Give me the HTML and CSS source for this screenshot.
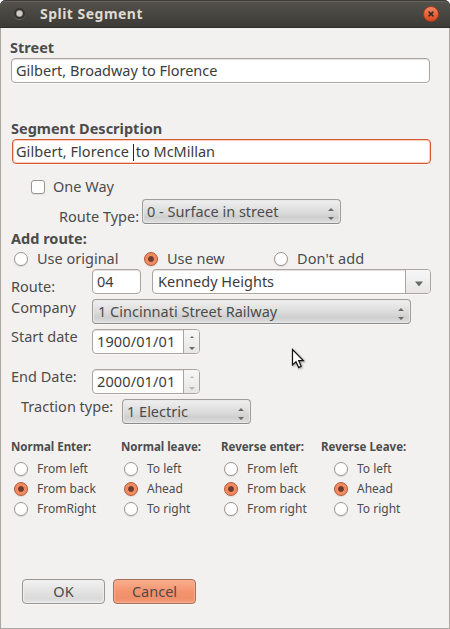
FILE: index.html
```html
<!DOCTYPE html>
<html lang="en">
<head>
<meta charset="utf-8">
<title>Split Segment</title>
<link rel="stylesheet" href="styles.css">
</head>
<body>
<div class="window">
  <header class="titlebar">
    <span class="app-dot"></span>
    <h1>Split Segment</h1>
    <span class="close"><svg width="16" height="16" viewBox="0 0 16 16"><path d="M5.6 5.6l4.8 4.8M10.4 5.6l-4.8 4.8"/></svg></span>
  </header>
  <main class="form">
    <div class="heading street-title">Street</div>
    <div class="entry wide"><span>Gilbert, Broadway to Florence</span></div>
    <div class="heading segment-title">Segment Description</div>
    <div class="entry wide focus"><span class="before-caret">Gilbert, Florence </span><i class="caret"></i><span>to McMillan</span></div>
    <div class="row check-row"><span class="checkbox"></span><span>One Way</span></div>
    <div class="row type-row"><span class="label">Route Type:</span>
      <div class="select type"><span>0 - Surface in street</span><svg class="arrows" width="8" height="14" viewBox="0 0 8 14"><path d="M1 4L4 1L7 4zM1 10L4 13L7 10z"/></svg></div></div>
    <div class="heading">Add route:</div>
    <div class="row radios">
      <label class="option"><i class="radio"></i><span>Use original</span></label>
      <label class="option"><i class="radio on"></i><span>Use new</span></label>
      <label class="option"><i class="radio"></i><span class="dont-add">Don't add</span></label>
    </div>
    <div class="row route-row"><span class="label low">Route:</span>
      <div class="entry number"><span>04</span></div>
      <div class="entry combo"><span>Kennedy Heights</span><span class="drop"><svg width="8" height="6" viewBox="0 0 8 6"><path d="M0 .5H8L4 5.5z"/></svg></span></div></div>
    <div class="row company-row"><span class="label">Company</span>
      <div class="select company"><span>1 Cincinnati Street Railway</span><svg class="arrows" width="8" height="14" viewBox="0 0 8 14"><path d="M1 4L4 1L7 4zM1 10L4 13L7 10z"/></svg></div></div>
    <div class="row date-row"><span class="label">Start date</span>
      <div class="entry spin"><span class="date">1900/01/01</span><span class="steps"><svg width="6" height="16" viewBox="0 0 6 16"><path d="M1 4L3 2L5 4zM0 13H6L3 16z"/></svg></span></div></div>
    <div class="row date-row end"><span class="label">End Date:</span>
      <div class="entry spin"><span class="date">2000/01/01</span><span class="steps off"><svg width="6" height="16" viewBox="0 0 6 16"><path d="M1 4L3 2L5 4zM0 13H6L3 16z"/></svg></span></div></div>
    <div class="row traction-row"><span class="label">Traction type:</span>
      <div class="select traction"><span>1 Electric</span><svg class="arrows" width="8" height="14" viewBox="0 0 8 14"><path d="M1 4L4 1L7 4zM1 10L4 13L7 10z"/></svg></div></div>
    <div class="groups">
      <section><h2>Normal Enter:</h2>
        <label class="option"><i class="radio"></i><span>From left</span></label>
        <label class="option"><i class="radio on"></i><span>From back</span></label>
        <label class="option"><i class="radio"></i><span>FromRight</span></label></section>
      <section><h2>Normal leave:</h2>
        <label class="option"><i class="radio"></i><span>To left</span></label>
        <label class="option"><i class="radio on"></i><span>Ahead</span></label>
        <label class="option"><i class="radio"></i><span>To right</span></label></section>
      <section><h2>Reverse enter:</h2>
        <label class="option"><i class="radio"></i><span>From left</span></label>
        <label class="option"><i class="radio on"></i><span>From back</span></label>
        <label class="option"><i class="radio"></i><span>From right</span></label></section>
      <section class="last"><h2>Reverse Leave:</h2>
        <label class="option"><i class="radio"></i><span>To left</span></label>
        <label class="option"><i class="radio on"></i><span>Ahead</span></label>
        <label class="option"><i class="radio"></i><span>To right</span></label></section>
    </div>
    <footer class="actions"><div class="button"><span>OK</span></div><div class="button cancel"><span>Cancel</span></div></footer>
  </main>
  <svg class="pointer" width="15" height="22" viewBox="0 0 15 22"><path d="M1.5 1.5V17L5 13.8L7.7 19.6L10.2 18.3L7.7 12.7H12.4z"/></svg>
</div>
</body>
</html>
```
FILE: styles.css
```css
* { box-sizing: border-box; }
body { margin: 0; background: #fff; font: 14.5px/20px "Noto Sans", "Open Sans", sans-serif; color: #4c4c4c; }
.window { position: relative; width: 450px; height: 629px; background: #f2f1f0; border: 1px solid #aaa7a1; border-top: 0; border-radius: 6px 6px 0 0; white-space: nowrap; }
.titlebar { height: 28px; margin: 0 -1px; padding: 0 11px 0 14px; display: flex; align-items: center; background: linear-gradient(#53524b, #3c3b37); border-radius: 6px 6px 0 0; border-bottom: 1px solid #302f2c; box-shadow: inset 0 1px #3c3b37, inset 0 2px #67655d; }
.titlebar h1 { margin: 0; font-size: 14px; font-weight: bold; color: #dfdbd2; letter-spacing: .48px; }
.app-dot { width: 11px; height: 11px; margin-right: 15px; border-radius: 50%; background: radial-gradient(circle, #d0cdc6 0 2.5px, #34332f 4px 5px); box-shadow: 0 1px #69675f; }
.close { width: 16px; height: 16px; margin-left: auto; border-radius: 50%; background: linear-gradient(#f48461, #dc4919); border: 1px solid #a53d1c; }
.close svg { display: block; margin: -1px; }
.close path { fill: none; stroke: #3b2a22; stroke-width: 1.5; }
.form { padding: 9px 0 0 10px; }
.heading { height: 20px; font-weight: bold; }
.street-title { margin: 0 0 1px -1px; }
.segment-title { margin: 35px 0 1px; }
.row { display: flex; align-items: flex-start; }
.label { width: 81px; flex: none; }
.entry { height: 25px; display: flex; align-items: flex-start; padding: 1px 0 0 4px; background: #fff; border: 1px solid #aaa59f; border-radius: 4px; box-shadow: inset 0 1px 1px #e3e1de, 0 1px #faf9f8; color: #3c3c3c; }
.wide { width: 419px; }
.focus { margin-left: 1px; padding-left: 3px; border-color: #d35a31; box-shadow: inset 0 0 0 1px #f8cdbb, 0 1px #faf9f8; }
.before-caret { white-space: pre; letter-spacing: .05px; }
.caret { width: 1px; height: 17px; margin: 3px 2px 0 0; background: #222; }
.check-row { margin-top: 12px; padding-left: 20px; height: 23px; }
.checkbox { width: 14px; height: 14px; margin: 4px 8px 0 0; background: #fff; border: 1px solid #99948e; border-radius: 3px; box-shadow: 0 1px #e2e1df; }
.type-row { height: 29px; padding-left: 48px; }
.type-row .label { width: 83px; padding-top: 7px; }
.select { height: 25px; display: flex; align-items: flex-start; padding: 1px 5px 0; border: 1px solid #a09e9b; border-bottom-color: #8c8b89; border-radius: 4px; background: linear-gradient(#f0f0f0, #dadada 55%, #cfcfcf 75%, #dedede); box-shadow: inset 0 0 1px 1px #e8e8e8, 0 1px #faf9f8; }
.type { width: 199px; padding-left: 4px; }
.company { width: 319px; }
.traction { width: 129px; padding-left: 4px; }
.arrows { margin: 6px 0 0 auto; fill: #6a6a6a; }
.radios { height: 21px; }
.option { display: flex; height: 20px; }
.radios .option { width: 130px; }
.radio { width: 14px; height: 14px; flex: none; margin: 4px 9px 0 3px; background: #fff; border: 1px solid #99948e; border-radius: 50%; box-shadow: 0 1px 1px #dcdad8; }
.radio.on { border-color: #b45834; background: radial-gradient(circle, #6b3b2c 0 2.4px, #f18a61 3.4px); }
.dont-add { letter-spacing: .1px; }
.route-row, .company-row { height: 30px; }
.low { padding-top: 7px; }
.number { width: 49px; margin-right: 11px; }
.combo { width: 279px; padding-left: 5px; }
.drop { margin: -1px 0 0 auto; width: 25px; height: 23px; display: flex; align-items: center; justify-content: center; padding: 4px 0 0 2px; border-left: 1px solid #aaa59f; border-radius: 0 3px 3px 0; background: linear-gradient(#f7f7f7, #e7e6e5); fill: #6a6a6a; }
.company-row .label { margin-top: -2px; }
.date-row { height: 40px; }
.date-row.end { height: 30px; }
.date-row .label, .traction-row .label { margin-top: -3px; }
.spin { width: 108px; padding-left: 4px; }
.date { letter-spacing: .12px; }
.steps { margin: -1px 0 0 auto; width: 16px; height: 23px; padding: 4px 0 0 5px; border-left: 1px solid #aaa59f; border-radius: 0 3px 3px 0; background: linear-gradient(#f7f7f7, #e7e6e5); fill: #6a6a6a; }
.steps svg { display: block; }
.steps.off { fill: #b8b6b4; }
.traction-row { height: 38px; padding-left: 10px; }
.traction-row .label { width: 101px; }
.groups { display: flex; font-size: 12px; }
.groups section { width: 100px; }
.groups section:first-child { width: 110px; }
.groups h2 { margin: 0 0 2px; font-size: 11.5px; line-height: 20px; font-weight: bold; }
.groups .radio { margin-top: 3px; }
.groups section.last .option { margin-left: 10px; }
.actions { display: flex; gap: 8px; padding: 60px 0 0 11px; }
.button { width: 83px; height: 25px; display: flex; justify-content: center; padding-top: 1px; border: 1px solid #999795; border-radius: 4px; background: linear-gradient(#f2f2f2, #e4e4e4 45%, #dadada 80%, #e4e4e4); box-shadow: inset 0 0 1px 1px #eee, 0 1px #faf9f8; }
.cancel { border-color: #a6715a; background: linear-gradient(#fbae8f, #f4946f 50%, #f0906a 80%, #f49c78); box-shadow: inset 0 0 1px 1px #f8ac8e, 0 1px #faf9f8; }
.pointer { position: absolute; left: 290px; top: 348px; filter: drop-shadow(1px 1px 1px #0005); fill: #fff; stroke: #111; stroke-width: 1.2; }
```
